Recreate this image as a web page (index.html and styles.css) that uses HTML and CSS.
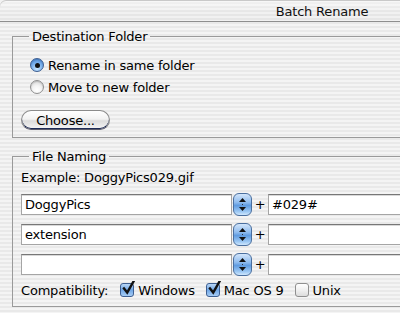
FILE: index.html
```html
<!DOCTYPE html>
<html>
<head>
<meta charset="utf-8">
<title>Batch Rename</title>
<link rel="stylesheet" href="styles.css">
</head>
<body>
<div class="window">
  <div class="titlebar"><span class="title">Batch Rename</span></div>
  <div class="content">
    <fieldset class="group group-dest">
      <legend>Destination Folder</legend>
      <div class="radio-row"><span class="radio on"></span><span>Rename in same folder</span></div>
      <div class="radio-row"><span class="radio"></span><span>Move to new folder</span></div>
      <button class="aqua-btn">Choose...</button>
    </fieldset>
    <fieldset class="group group-naming">
      <legend>File Naming</legend>
      <div class="example">Example: DoggyPics029.gif</div>
      <div class="name-row">
        <div class="field">DoggyPics</div>
        <span class="stepper"><svg width="7" height="13" viewBox="0 0 7 13"><path d="M3.5 0 L7 4 H0 Z M3.5 13 L0 9 H7 Z" fill="#111"/><rect x="3" y="6" width="1" height="1" fill="#333"/></svg></span>
        <span class="plus">+</span>
        <div class="field field-b">#029#</div>
      </div>
      <div class="name-row">
        <div class="field">extension</div>
        <span class="stepper"><svg width="7" height="13" viewBox="0 0 7 13"><path d="M3.5 0 L7 4 H0 Z M3.5 13 L0 9 H7 Z" fill="#111"/><rect x="3" y="6" width="1" height="1" fill="#333"/></svg></span>
        <span class="plus">+</span>
        <div class="field field-b"></div>
      </div>
      <div class="name-row">
        <div class="field"></div>
        <span class="stepper"><svg width="7" height="13" viewBox="0 0 7 13"><path d="M3.5 0 L7 4 H0 Z M3.5 13 L0 9 H7 Z" fill="#111"/><rect x="3" y="6" width="1" height="1" fill="#333"/></svg></span>
        <span class="plus">+</span>
        <div class="field field-b"></div>
      </div>
      <div class="compat">
        <span class="compat-label">Compatibility:</span>
        <span class="opt"><span class="check on"><svg width="16" height="16" viewBox="0 0 16 16"><path d="M3 7.5 L6.2 11.5 L12.5 0.5" fill="none" stroke="#111" stroke-width="2.4" stroke-linecap="square"/></svg></span>Windows</span>
        <span class="opt"><span class="check on"><svg width="16" height="16" viewBox="0 0 16 16"><path d="M3 7.5 L6.2 11.5 L12.5 0.5" fill="none" stroke="#111" stroke-width="2.4" stroke-linecap="square"/></svg></span>Mac OS 9</span>
        <span class="opt"><span class="check"></span>Unix</span>
      </div>
    </fieldset>
  </div>
</div>
</body>
</html>
```
FILE: styles.css
```css
html, body {
  margin: 0;
  padding: 0;
  overflow: hidden;
  background: #f2f2f2;
}
body {
  font-family: "DejaVu Sans", "Liberation Sans", sans-serif;
  font-size: 13px;
  letter-spacing: -0.2px;
  color: #000;
}
.window {
  width: 644px;
  height: 313px;
  background: repeating-linear-gradient(180deg, #f4f4f4 0, #f4f4f4 2px, #e9e9e9 2px, #e9e9e9 4px);
  border-top-left-radius: 6px;
}
.titlebar {
  height: 21px;
  border-bottom: 1px solid #8e8e8e;
  display: flex;
  justify-content: center;
  align-items: center;
  border-top-left-radius: 6px;
  background:
    linear-gradient(180deg, rgba(255,255,255,0.5), rgba(255,255,255,0) 60%),
    repeating-linear-gradient(180deg, #f1f1f1 0, #f1f1f1 2px, #e6e6e6 2px, #e6e6e6 4px);
  box-shadow: inset 0 1px 0 #c9c9c9;
}
.title {
  font-size: 13px;
  color: #111;
  padding-top: 1px;
}
.content {
  padding-top: 6px;
}
.group {
  margin: 0 12px;
  border: 1px solid #9a9a9a;
  padding: 0 8px;
  min-width: 0;
}
.group legend {
  margin-left: 8px;
  padding: 0 3px;
  line-height: 17px;
  height: 17px;
}
.group-dest {
  padding-top: 9px;
  padding-bottom: 7px;
}
.radio-row {
  display: flex;
  align-items: center;
  height: 22px;
  padding-left: 9px;
  gap: 4px;
}
.radio {
  width: 14px;
  height: 14px;
  border-radius: 50%;
  box-sizing: border-box;
  border: 1px solid #8f8f8f;
  background: radial-gradient(circle at 50% 75%, #ffffff 0, #f4f4f4 40%, #cfcfcf 100%);
  box-shadow: inset 0 1px 1px rgba(0,0,0,0.15);
  display: flex;
  align-items: center;
  justify-content: center;
}
.radio.on {
  border-color: #3d5f92;
  background: radial-gradient(circle at 50% 80%, #c9e6ff 0, #7fb4ee 45%, #3f7fd2 100%);
}
.radio.on::after {
  content: "";
  width: 5px;
  height: 5px;
  border-radius: 50%;
  background: #111;
}
.aqua-btn {
  display: block;
  margin-top: 12px;
  width: 89px;
  height: 20px;
  border-radius: 10px;
  border: 1px solid #8b8b8b;
  border-bottom-color: #5a5a6a;
  background: linear-gradient(180deg, #ffffff 0, #f2f2f2 45%, #dcdcdc 55%, #f6f6f6 100%);
  font-family: "DejaVu Sans", "Liberation Sans", sans-serif;
  font-size: 13px;
  letter-spacing: -0.2px;
  color: #000;
  padding: 0;
  line-height: 17px;
  box-shadow: inset 0 -1px 0 #1c2a55;
}
.group-naming {
  margin-top: 10px;
  padding-top: 5px;
  padding-bottom: 8px;
}
.example {
  line-height: 16px;
}
.name-row {
  display: flex;
  align-items: center;
  margin-top: 7px;
}
.field {
  width: 211px;
  height: 21px;
  box-sizing: border-box;
  background: #fff;
  border: 1px solid #a5a5a5;
  border-top-color: #777;
  box-shadow: inset 0 1px 0 #d9d9d9;
  padding-left: 3px;
  line-height: 19px;
}
.field-b {
  width: 220px;
}
.stepper {
  width: 19px;
  height: 23px;
  margin-left: 1px;
  box-sizing: border-box;
  border: 1px solid #4a6f9f;
  border-radius: 6px;
  background: linear-gradient(180deg, #d3e6fb 0, #8ebbee 40%, #5f9be0 55%, #9fcaf4 85%, #cfe7fd 100%);
  display: flex;
  align-items: center;
  justify-content: center;
}
.plus {
  width: 16px;
  text-align: center;
}
.compat {
  display: flex;
  align-items: center;
  margin-top: 6px;
  height: 16px;
}
.compat-label {
  margin-right: 12px;
}
.opt {
  display: flex;
  align-items: center;
  gap: 4px;
  margin-right: 11px;
}
.check {
  width: 14px;
  height: 14px;
  box-sizing: border-box;
  border: 1px solid #8f8f8f;
  border-radius: 3px;
  background: linear-gradient(180deg, #ffffff 0, #f0f0f0 50%, #dcdcdc 100%);
  position: relative;
}
.check.on {
  border-color: #3d5f92;
  background: linear-gradient(180deg, #b9d7f7 0, #6fa6e6 50%, #a7cdf5 100%);
}
.check svg {
  position: absolute;
  left: 0;
  top: -3px;
}
```
